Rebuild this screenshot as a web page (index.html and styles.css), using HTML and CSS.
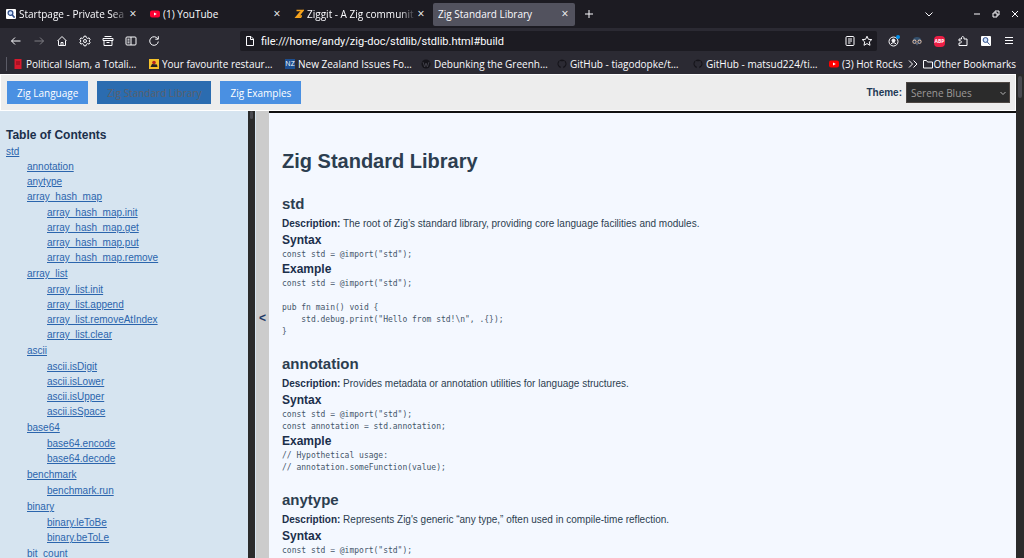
FILE: index.html
```html
<!DOCTYPE html>
<html lang="en">
<head>
  <meta charset="UTF-8" />
  <title>Zig Standard Library</title>
  <meta name="viewport" content="width=device-width, initial-scale=1.0"/>
  <link rel="stylesheet" href="styles.css">
</head>
<body>
<header class="browser">
  <div class="tab-bar">
    <div class="tab">
      <svg class="fav" viewBox="0 0 10 10"><rect width="10" height="10" rx="1" fill="#fff"/><circle cx="4.5" cy="4" r="2.4" fill="#cfe3ff" stroke="#2c4a86" stroke-width="1.2"/><path d="M6.3 6 8.6 8.6" stroke="#2c4a86" stroke-width="1.6"/></svg>
      <span class="tab-title fade">Startpage - Private Sea</span>
      <button class="tab-close" aria-label="Close tab">×</button>
    </div>
    <div class="tab">
      <svg class="fav" viewBox="0 0 10 10"><rect y="1.5" width="10" height="7" rx="2" fill="#f03"/><path d="M4 3.5 6.8 5 4 6.5z" fill="#fff"/></svg>
      <span class="tab-title">(1) YouTube</span>
      <button class="tab-close" aria-label="Close tab">×</button>
    </div>
    <div class="tab">
      <svg class="fav" viewBox="0 0 10 10"><path d="M2.5 1.5H9L4.500 7H8" fill="none" stroke="#f7a41d" stroke-width="1.6"/><path d="M9.5.5 5 7.500H8L7 9H.5L6 2.500z" fill="#f7a41d"/></svg>
      <span class="tab-title fade">Ziggit - A Zig communit</span>
      <button class="tab-close" aria-label="Close tab">×</button>
    </div>
    <div class="tab active">
      <span class="tab-title">Zig Standard Library</span>
      <button class="tab-close" aria-label="Close tab">×</button>
    </div>
    <button class="icon-btn" aria-label="New tab"><svg viewBox="0 0 12 12"><path d="M6 2v8M2 6h8"/></svg></button>
    <div class="window-controls">
      <button class="icon-btn list-tabs" aria-label="List all tabs"><svg viewBox="0 0 12 12"><path d="M2.5 4.5 6 8l3.5-3.5"/></svg></button>
      <button class="icon-btn" aria-label="Minimize"><svg viewBox="0 0 12 12"><path d="M3 6h6"/></svg></button>
      <button class="icon-btn" aria-label="Restore"><svg viewBox="0 0 12 12"><path d="M3 5h4v4H3zM5 5V3h4v4H7"/></svg></button>
      <button class="icon-btn" aria-label="Close window"><svg viewBox="0 0 12 12"><path d="m3 3 6 6M9 3 3 9"/></svg></button>
    </div>
  </div>

  <div class="toolbar">
    <div class="tools">
      <button class="icon-btn" aria-label="Back"><svg viewBox="0 0 12 12"><path d="M10.5 6h-9M5 2.5 1.5 6 5 9.5"/></svg></button>
      <button class="icon-btn dim" aria-label="Forward"><svg viewBox="0 0 12 12"><path d="M1.5 6h9M7 2.5 10.5 6 7 9.5"/></svg></button>
      <button class="icon-btn" aria-label="Home"><svg viewBox="0 0 12 12"><path d="M1.5 6 6 1.5 10.5 6M2.5 5.5v5h7v-5M5 10.500v-3h2v3"/></svg></button>
      <button class="icon-btn" aria-label="Settings"><svg viewBox="0 0 12 12"><path d="M5 1.200h2l.4 1.500 1.200.7 1.500-.5 1 1.700L10 6l1.100 1.400-1 1.700-1.500-.5-1.200.7L7 10.800H5l-.4-1.500-1.200-.7-1.500.5-1-1.700L2 6 .9 4.600l1-1.700 1.500.5 1.200-.7z"/><circle cx="6" cy="6" r="1.500"/></svg></button>
      <button class="icon-btn" aria-label="Archive"><svg viewBox="0 0 12 12"><path d="M2.5 1.5h7M1 3.5h10v2H1zM2 5.5v5h8v-5M4.500 7.500h3"/></svg></button>
      <button class="icon-btn" aria-label="Sidebar"><svg viewBox="0 0 12 12"><rect x="1" y="2" width="10" height="8" rx="1"/><path d="M6 2v8M2.5 4.200h2M2.5 6h2M2.5 7.800h2"/></svg></button>
      <button class="icon-btn" aria-label="Reload"><svg viewBox="0 0 12 12"><path d="M9.700 3.800A4.300 4.300 0 1 0 10.300 6.500M10.300 1.200v3h-3"/></svg></button>
    </div>
    <div class="url-bar">
      <svg class="line-icon" viewBox="0 0 12 12"><path d="M2.5 1.5H7L9.500 4v6.500h-7zM6.500 1.500v3h3"/></svg>
      <input type="text" aria-label="Address" value="file:///home/andy/zig-doc/stdlib/stdlib.html#build">
      <svg class="line-icon" viewBox="0 0 12 12"><rect x="2" y="1.5" width="8" height="9" rx="1"/><path d="M4 4h4M4 6h4M4 8h2.500"/></svg>
      <svg class="line-icon" viewBox="0 0 12 12"><path d="m6 1.200 1.400 3.100 3.400.3-2.500 2.300.7 3.400L6 8.600l-3 1.700.7-3.400L1.200 4.600l3.400-.3z"/></svg>
    </div>
    <div class="tools">
      <button class="icon-btn" aria-label="Account"><svg viewBox="0 0 12 12"><circle cx="5.500" cy="6.500" r="4.500"/><circle cx="5.500" cy="5.500" r="1.500" fill="#fbfbfe"/><path d="M3 9c.8-1.700 4.200-1.700 5 0"/><circle cx="10" cy="2" r="2" fill="#0090ed" stroke="none"/></svg></button>
      <button class="icon-btn" aria-label="Privacy extension"><svg class="filled" viewBox="0 0 12 12"><path d="M2 5c0-4 8-4 8 0z" fill="#33506e"/><path d="M4 8h4l-2 2.500z" fill="#4a5f7c"/><circle cx="3.500" cy="6.700" r="2.100" fill="#e8c8b0"/><circle cx="8.500" cy="6.700" r="2.100" fill="#e8c8b0"/><circle cx="3.500" cy="6.700" r="1.200" fill="#263a5c"/><circle cx="8.500" cy="6.700" r="1.200" fill="#263a5c"/></svg></button>
      <button class="icon-btn" aria-label="Adblock Plus"><span class="abp">ABP</span></button>
      <button class="icon-btn" aria-label="Extensions"><svg viewBox="0 0 12 12"><path d="M2 4h2.500V3c0-2 2.500-2 2.500 0v1h3v6.500H2V8h1c2 0 2-2.200 0-2.200H2z"/></svg></button>
      <button class="icon-btn" aria-label="Startpage"><svg viewBox="0 0 12 12"><rect x="1" y="1" width="10" height="10" rx="1" fill="#fff" stroke="none"/><circle cx="5.500" cy="5" r="2.400" fill="#cfe3ff" stroke="#2c4a86"/><path d="M7.300 7 9.600 9.600" stroke="#2c4a86"/></svg></button>
      <button class="icon-btn" aria-label="Menu"><svg viewBox="0 0 12 12"><path d="M2 2.500h8M2 5.500h8M2 8.500h8"/></svg></button>
    </div>
  </div>

  <nav class="bookmarks" aria-label="Bookmarks">
    <div class="bookmark-list">
      <a href="#"><svg class="fav" viewBox="0 0 10 10"><rect x="1.500" width="7" height="10" fill="#d7192d"/><path d="M3 3h4M3 5h4" stroke="#7c0c1a"/></svg>Political Islam, a Totali…</a>
      <a href="#"><svg class="fav" viewBox="0 0 10 10"><rect width="10" height="10" fill="#f5c22b"/><path d="M1.500 8 3 5l5 .5.5 2.500z" fill="#222"/><circle cx="5" cy="3.500" r="1.800" fill="#b3261e"/></svg>Your favourite restaur…</a>
      <a href="#"><span class="fav nz">NZ</span>New Zealand Issues Fo…</a>
      <a href="#"><svg class="fav" viewBox="0 0 10 10"><circle cx="5" cy="5" r="4.500" fill="#15141a"/><path d="m2 3 1.700 5L5 4l1.400 4L8 3" fill="none" stroke="#3d3c45"/></svg>Debunking the Greenh…</a>
      <a href="#"><svg class="fav" viewBox="0 0 10 10"><path d="M3.700 9.200V7.500C.8 6.800 1.300 3.500 2.300 3V1.500L4 2.300h2l1.700-.8V3c1 .5 1.500 3.800-1.400 4.500v1.700A4.500 4.500 0 1 0 3.700 9.200z" fill="#15141a"/></svg>GitHub - tiagodopke/t…</a>
      <a href="#"><svg class="fav" viewBox="0 0 10 10"><path d="M3.700 9.200V7.500C.8 6.800 1.300 3.500 2.300 3V1.500L4 2.300h2l1.700-.8V3c1 .5 1.500 3.800-1.400 4.500v1.700A4.500 4.500 0 1 0 3.700 9.200z" fill="#15141a"/></svg>GitHub - matsud224/ti…</a>
      <a href="#"><svg class="fav" viewBox="0 0 10 10"><rect y="1.500" width="10" height="7" rx="2" fill="red"/><path d="M4 3.500 6.800 5 4 6.500z" fill="#fff"/></svg>(3) Hot Rocks</a>
    </div>
    <button class="icon-btn" aria-label="More bookmarks"><svg viewBox="0 0 12 12"><path d="M2 2.500 5.500 6 2 9.500M6.500 2.500 10 6 6.500 9.500"/></svg></button>
    <a class="other" href="#"><svg class="line-icon" viewBox="0 0 12 12"><path d="M1.500 2.500h3l1 1.500h5v6h-9z"/></svg>Other Bookmarks</a>
  </nav>
</header>

<div class="viewport">
  <div class="page">
    <div class="top-nav">
      <button>Zig Language</button>
      <button disabled>Zig Standard Library</button>
      <button>Zig Examples</button>
      <label for="theme">Theme:</label>
      <div class="select-wrap">
        <select id="theme">
          <option>Serene Blues</option>
        </select>
        <svg class="arrow" viewBox="0 0 8 8"><path d="m1.500 3 2.500 2.500L6.500 3"/></svg>
      </div>
    </div>

    <div class="columns">
      <aside class="sidebar">
        <h3>Table of Contents</h3>
        <a href="#std">std</a>
        <ul>
          <li><a href="#annotation">annotation</a></li>
          <li><a href="#anytype">anytype</a></li>
          <li><a href="#">array_hash_map</a>
            <ul>
              <li><a href="#">array_hash_map.init</a></li>
              <li><a href="#">array_hash_map.get</a></li>
              <li><a href="#">array_hash_map.put</a></li>
              <li><a href="#">array_hash_map.remove</a></li>
            </ul>
          </li>
          <li><a href="#">array_list</a>
            <ul>
              <li><a href="#">array_list.init</a></li>
              <li><a href="#">array_list.append</a></li>
              <li><a href="#">array_list.removeAtIndex</a></li>
              <li><a href="#">array_list.clear</a></li>
            </ul>
          </li>
          <li><a href="#">ascii</a>
            <ul>
              <li><a href="#">ascii.isDigit</a></li>
              <li><a href="#">ascii.isLower</a></li>
              <li><a href="#">ascii.isUpper</a></li>
              <li><a href="#">ascii.isSpace</a></li>
            </ul>
          </li>
          <li><a href="#">base64</a>
            <ul>
              <li><a href="#">base64.encode</a></li>
              <li><a href="#">base64.decode</a></li>
            </ul>
          </li>
          <li><a href="#">benchmark</a>
            <ul>
              <li><a href="#">benchmark.run</a></li>
            </ul>
          </li>
          <li><a href="#">binary</a>
            <ul>
              <li><a href="#">binary.leToBe</a></li>
              <li><a href="#">binary.beToLe</a></li>
            </ul>
          </li>
          <li><a href="#">bit_count</a></li>
        </ul>
      </aside>
      <div class="scrollbar"><div class="thumb"></div></div>
      <button class="toggle" aria-label="Hide contents">&lt;</button>

      <main>
        <h1>Zig Standard Library</h1>

        <section id="std">
          <h2>std</h2>
          <p><strong>Description:</strong> The root of Zig’s standard library, providing core language facilities and modules.</p>
          <h3>Syntax</h3>
<pre>const std = @import("std");</pre>
          <h3>Example</h3>
<pre>const std = @import("std");

pub fn main() void {
    std.debug.print("Hello from std!\n", .{});
}</pre>
        </section>

        <section id="annotation">
          <h2>annotation</h2>
          <p><strong>Description:</strong> Provides metadata or annotation utilities for language structures.</p>
          <h3>Syntax</h3>
<pre>const std = @import("std");
const annotation = std.annotation;</pre>
          <h3>Example</h3>
<pre>// Hypothetical usage:
// annotation.someFunction(value);</pre>
        </section>

        <section id="anytype">
          <h2>anytype</h2>
          <p><strong>Description:</strong> Represents Zig's generic “any type,” often used in compile-time reflection.</p>
          <h3>Syntax</h3>
<pre>const std = @import("std");
const anytype = std.anytype;</pre>
        </section>
      </main>
    </div>
  </div>
  <div class="scrollbar"><div class="thumb"></div></div>
</div>
</body>
</html>
```
FILE: styles.css
```css
* {
  box-sizing: border-box;
}

body {
  margin: 0;
  height: 100vh;
  display: flex;
  flex-direction: column;
  overflow: hidden;
  font-family: "Liberation Sans", Arial, sans-serif;
  font-size: 10px;
  color: #2c3e50;
}

button, input, select {
  font: inherit;
  border: none;
  padding: 0;
  margin: 0;
}

button {
  cursor: pointer;
}

/* browser window */
.browser {
  background: #2b2a33;
  color: #fbfbfe;
  font-family: "Open Sans", "Noto Sans", sans-serif;
  flex: none;
}

.tab-bar {
  display: flex;
  align-items: center;
  height: 28px;
  background: #1c1b22;
  padding-left: 1px;
}

.tab {
  display: flex;
  align-items: center;
  width: 142px;
  height: 23px;
  margin-right: 2px;
  padding: 0 5px;
  border-radius: 2px;
}

.tab.active {
  background: #52525e;
}

.tab .fav {
  margin-right: 3px;
}

.tab-title {
  flex: 1;
  overflow: hidden;
  white-space: nowrap;
}

.fade {
  mask-image: linear-gradient(to right, #000 85%, transparent);
}

.tab-close {
  width: 10px;
  background: none;
  color: inherit;
  font-size: 12px;
  line-height: 12px;
}

.fav {
  width: 10px;
  height: 10px;
  flex: none;
}

.icon-btn {
  display: flex;
  align-items: center;
  justify-content: center;
  width: 23px;
  height: 20px;
  background: none;
  flex: none;
}

.icon-btn svg, .line-icon {
  width: 12px;
  height: 12px;
  flex: none;
  fill: none;
  stroke: #fbfbfe;
  stroke-width: 1;
}

.icon-btn .filled {
  stroke: none;
}

.dim {
  opacity: 0.4;
}

.window-controls {
  display: flex;
  margin-left: auto;
}

.window-controls .icon-btn {
  width: 19px;
}

.window-controls .list-tabs {
  margin-right: 29px;
}

.toolbar {
  display: flex;
  align-items: center;
  height: 26px;
  padding: 0 4px;
}

.tools {
  display: flex;
}

.url-bar {
  flex: 1;
  display: flex;
  align-items: center;
  gap: 5px;
  height: 20px;
  margin: 0 5px 0 75px;
  padding: 0 4px;
  border-radius: 2px;
  background: #1c1b22;
}

.url-bar input {
  flex: 1;
  background: none;
  color: inherit;
  font-family: Roboto, sans-serif;
  font-size: 11px;
}

.abp {
  width: 11px;
  height: 11px;
  border-radius: 4px;
  background: #ed1e45;
  color: #fff;
  font-size: 5px;
  font-weight: bold;
  line-height: 11px;
  text-align: center;
}

.bookmarks {
  display: flex;
  align-items: center;
  height: 20px;
  padding: 0 8px 0 6px;
}

.bookmarks a {
  color: inherit;
  text-decoration: none;
  white-space: nowrap;
}

.bookmark-list {
  flex: 1;
  display: flex;
  overflow: hidden;
  padding-left: 6px;
  border-left: 1px solid #5b5b66;
}

.bookmark-list a {
  flex: 0 0 136px;
  display: flex;
  align-items: center;
  gap: 3px;
}

.nz {
  background: #1d4f91;
  color: #fff;
  font-size: 7px;
  line-height: 10px;
  text-align: center;
}

.bookmarks .icon-btn {
  width: 17px;
}

.other {
  display: flex;
  align-items: center;
}

/* page */
.viewport {
  flex: 1;
  display: flex;
  min-height: 0;
}

.page {
  flex: 1;
  display: flex;
  flex-direction: column;
  min-width: 0;
}

.scrollbar {
  width: 8px;
  flex: none;
  background: #2b2b2b;
  padding: 2px;
}

.thumb {
  height: 22px;
  border-radius: 2px;
  background: #4a4a50;
}

.columns .scrollbar {
  border-right: 1px solid #d6e4f0;
  padding: 0 2px;
}

.columns .thumb {
  height: 8px;
}

.top-nav {
  display: flex;
  align-items: center;
  gap: 9px;
  height: 37px;
  flex: none;
  padding: 0 5px 0 6px;
  background: #ededed;
  border: 1px solid #fff;
  font-family: "Open Sans", "Noto Sans", sans-serif;
}

.top-nav button {
  height: 23px;
  padding: 0 10px;
  background: #4a90e2;
  color: #fff;
}

.top-nav button:disabled {
  background: #2b6cb0;
  color: #5d6069;
}

.top-nav label {
  margin-left: auto;
  margin-right: -5px;
  font-family: "Liberation Sans", Arial, sans-serif;
  font-weight: bold;
  color: #1f3a56;
}

.select-wrap {
  position: relative;
}

.top-nav select {
  display: block;
  appearance: none;
  width: 104px;
  height: 21px;
  padding: 0 4px;
  background: #2b2b2b;
  color: #9d9a98;
  border: 1px solid #4d4642;
}

.arrow {
  position: absolute;
  right: 3px;
  top: 7px;
  width: 8px;
  height: 8px;
  fill: none;
  stroke: #b5b5b5;
  pointer-events: none;
}

.columns {
  flex: 1;
  display: flex;
  min-height: 0;
}

.sidebar {
  width: 248px;
  flex: none;
  overflow: hidden;
  padding: 16px 6px 0;
  background: #d6e4f0;
  line-height: 15px;
}

.sidebar h3 {
  margin: 0 0 1px;
  font-size: 12px;
  line-height: 16px;
  color: #1b2f4b;
}

.sidebar a {
  display: table;
  color: #2b65ad;
}

.sidebar ul {
  list-style: none;
  margin: 0;
  padding: 0 0 0 21px;
}

.sidebar ul ul {
  margin: 1px 0;
  padding-left: 20px;
}

.toggle {
  width: 13px;
  flex: none;
  padding-bottom: 34px;
  background: #ccc;
  color: #1f3a66;
  font-size: 12px;
  font-weight: bold;
}

main {
  flex: 1;
  min-width: 0;
  overflow: hidden;
  padding: 34px 13px 0;
  background: #f4f8ff;
  border-top: 2px solid #111;
}

main h1, main h2, main h3, main p, main pre {
  margin: 0;
}

main h1 {
  margin-bottom: 17px;
  font-size: 20px;
  line-height: 28px;
}

main h2 {
  font-size: 15px;
  line-height: 23px;
}

main h3 {
  font-size: 12px;
  line-height: 17px;
  color: #1b2f4b;
}

main p {
  line-height: 17px;
}

main strong {
  color: #1b2f4b;
}

main pre {
  font-family: "DejaVu Sans Mono", monospace;
  font-size: 8px;
  line-height: 12px;
  color: #44566a;
}

section {
  margin-bottom: 14px;
}
```
